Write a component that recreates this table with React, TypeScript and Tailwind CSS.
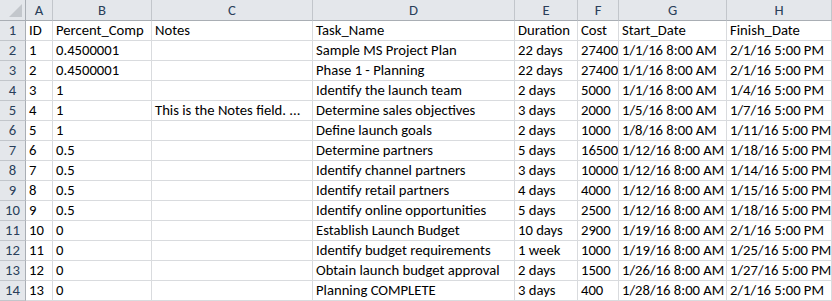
import React from "react";

const cols = ["A", "B", "C", "D", "E", "F", "G", "H"];

const rows: string[][] = [
  ["ID", "Percent_Comp", "Notes", "Task_Name", "Duration", "Cost", "Start_Date", "Finish_Date"],
  ["1", "0.4500001", "", "Sample MS Project Plan", "22 days", "27400", "1/1/16 8:00 AM", "2/1/16 5:00 PM"],
  ["2", "0.4500001", "", "Phase 1 - Planning", "22 days", "27400", "1/1/16 8:00 AM", "2/1/16 5:00 PM"],
  ["3", "1", "", "Identify the launch team", "2 days", "5000", "1/1/16 8:00 AM", "1/4/16 5:00 PM"],
  ["4", "1", "This is the Notes field. ...", "Determine sales objectives", "3 days", "2000", "1/5/16 8:00 AM", "1/7/16 5:00 PM"],
  ["5", "1", "", "Define launch goals", "2 days", "1000", "1/8/16 8:00 AM", "1/11/16 5:00 PM"],
  ["6", "0.5", "", "Determine partners", "5 days", "16500", "1/12/16 8:00 AM", "1/18/16 5:00 PM"],
  ["7", "0.5", "", "Identify channel partners", "3 days", "10000", "1/12/16 8:00 AM", "1/14/16 5:00 PM"],
  ["8", "0.5", "", "Identify retail partners", "4 days", "4000", "1/12/16 8:00 AM", "1/15/16 5:00 PM"],
  ["9", "0.5", "", "Identify online opportunities", "5 days", "2500", "1/12/16 8:00 AM", "1/18/16 5:00 PM"],
  ["10", "0", "", "Establish Launch Budget", "10 days", "2900", "1/19/16 8:00 AM", "2/1/16 5:00 PM"],
  ["11", "0", "", "Identify budget requirements", "1 week", "1000", "1/19/16 8:00 AM", "1/25/16 5:00 PM"],
  ["12", "0", "", "Obtain launch budget approval", "2 days", "1500", "1/26/16 8:00 AM", "1/27/16 5:00 PM"],
  ["13", "0", "", "Planning COMPLETE", "3 days", "400", "1/28/16 8:00 AM", "2/1/16 5:00 PM"],
];

export default function App() {
  return (
    <div
      className="w-[832px] h-[301px] overflow-hidden bg-white text-[14.67px] leading-none text-black"
      style={{ fontFamily: "Carlito, 'Liberation Sans Narrow', Lato, sans-serif" }}
    >
      <div className="grid grid-cols-[26px_27px_99px_161px_202px_63px_41px_108px_105px] grid-rows-[21px_repeat(14,20px)]">
        <div className="relative bg-[#e4e7eb] border-r border-b border-[#a9aeb4]">
          <div className="absolute right-[3px] bottom-[3px] w-0 h-0 border-l-[13px] border-l-transparent border-b-[13px] border-b-[#c3c7cc]" />
        </div>
        {cols.map((c) => (
          <div
            key={c}
            className="flex items-center justify-center bg-[#e4e7eb] border-r border-b border-r-[#c2c6cb] border-b-[#a9aeb4] text-[#2a3f5a]"
          >
            {c}
          </div>
        ))}
        {rows.map((r, i) => (
          <React.Fragment key={i}>
            <div className="flex items-center justify-center bg-[#e4e7eb] border-r border-b border-r-[#a9aeb4] border-b-[#c2c6cb] text-[#2a3f5a]">
              {i + 1}
            </div>
            {r.map((v, j) => (
              <div
                key={j}
                className="flex items-center pl-[3px] border-r border-b border-[#d9dbde] whitespace-nowrap overflow-hidden"
              >
                {v}
              </div>
            ))}
          </React.Fragment>
        ))}
      </div>
    </div>
  );
}
